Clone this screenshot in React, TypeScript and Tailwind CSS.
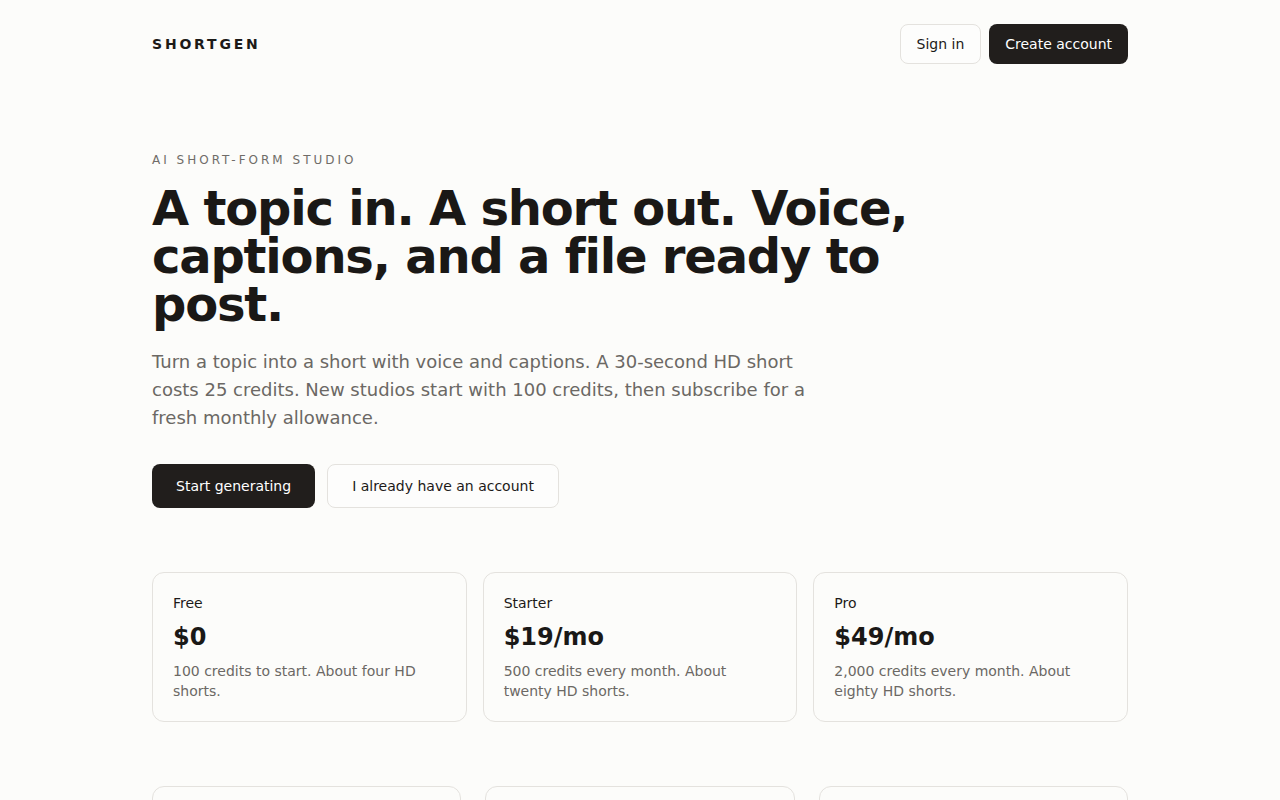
const PLANS = [
  { name: "Free", price: "$0", note: "100 credits to start. About four HD shorts." },
  { name: "Starter", price: "$19/mo", note: "500 credits every month. About twenty HD shorts." },
  { name: "Pro", price: "$49/mo", note: "2,000 credits every month. About eighty HD shorts." },
];

const STEPS = [
  { title: "Write the topic", body: "One line is enough. We draft the script and pacing for you." },
  { title: "Pick a voice", body: "Choose a narrator and a caption style that fits the channel." },
  { title: "Download the file", body: "Get a vertical HD video with burned-in captions, ready to post." },
];

function Header() {
  return (
    <header className="flex items-center justify-between py-6">
      <span className="text-sm font-bold tracking-[0.2em] text-[#1c1a18]">SHORTGEN</span>
      <nav className="flex items-center gap-2">
        <button className="rounded-lg border border-[#e4e2de] bg-[#fdfdfc] px-4 py-[9px] text-sm text-[#1c1a18]">
          Sign in
        </button>
        <button className="rounded-lg bg-[#211e1c] px-4 py-2.5 text-sm text-white">Create account</button>
      </nav>
    </header>
  );
}

function Hero() {
  return (
    <section className="pt-16">
      <p className="text-xs tracking-[0.25em] text-[#6f6c68]">AI SHORT-FORM STUDIO</p>
      <h1 className="mt-4 max-w-3xl text-5xl leading-none font-bold tracking-tight text-[#1a1816]">
        A topic in. A short out. Voice, captions, and a file ready to post.
      </h1>
      <p className="mt-5 max-w-2xl text-lg leading-7 text-[#6b6864]">
        Turn a topic into a short with voice and captions. A 30-second HD short costs 25 credits. New studios start
        with 100 credits, then subscribe for a fresh monthly allowance.
      </p>
      <div className="mt-8 flex items-start gap-3">
        <button className="rounded-lg bg-[#211e1c] px-6 py-3 text-sm text-white">Start generating</button>
        <button className="rounded-lg border border-[#e4e2de] bg-[#fdfdfc] px-6 py-[11px] text-sm text-[#1c1a18]">
          I already have an account
        </button>
      </div>
    </section>
  );
}

function Pricing() {
  return (
    <section className="mt-16 grid grid-cols-3 gap-4">
      {PLANS.map((p) => (
        <div key={p.name} className="rounded-xl border border-[#e4e2de] p-5">
          <p className="text-sm text-[#1c1a18]">{p.name}</p>
          <p className="mt-2 text-2xl font-bold text-[#1a1816]">{p.price}</p>
          <p className="mt-2 text-sm text-[#6b6864]">{p.note}</p>
        </div>
      ))}
    </section>
  );
}

function Steps() {
  return (
    <section className="mt-16 grid grid-cols-3 gap-6 pb-16">
      {STEPS.map((s, i) => (
        <div key={s.title} className="rounded-xl border border-[#e4e2de] p-5">
          <p className="text-xs tracking-[0.25em] text-[#6f6c68]">STEP {i + 1}</p>
          <p className="mt-2 text-base font-bold text-[#1a1816]">{s.title}</p>
          <p className="mt-2 text-sm text-[#6b6864]">{s.body}</p>
        </div>
      ))}
    </section>
  );
}

export default function App() {
  return (
    <div className="min-h-screen bg-[#fcfcfa] font-['DejaVu_Sans',sans-serif]">
      <div className="mx-auto max-w-5xl px-6">
        <Header />
        <Hero />
        <Pricing />
        <Steps />
      </div>
    </div>
  );
}
